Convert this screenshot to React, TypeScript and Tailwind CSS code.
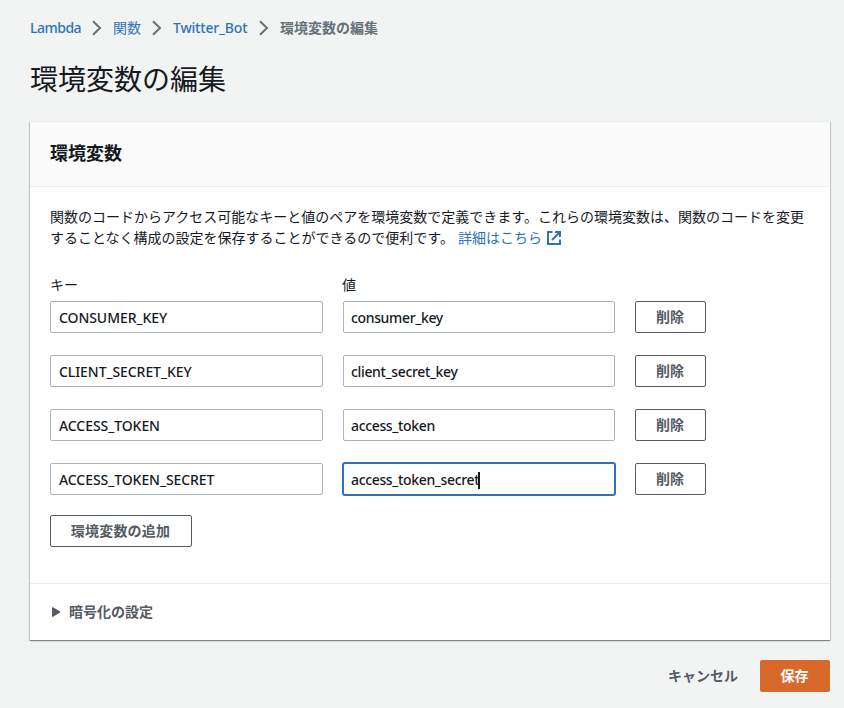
import { useState } from "react";
import { clsx } from "clsx";

type Variable = { key: string; value: string };

const initialVariables: Variable[] = [
  { key: "CONSUMER_KEY", value: "consumer_key" },
  { key: "CLIENT_SECRET_KEY", value: "client_secret_key" },
  { key: "ACCESS_TOKEN", value: "access_token" },
  { key: "ACCESS_TOKEN_SECRET", value: "access_token_secret" },
];

function Chevron() {
  return (
    <svg viewBox="0 0 10 16" className="mr-[11px] ml-[11px] h-4 w-2.5 shrink-0" fill="none" stroke="#687078" strokeWidth="2">
      <path d="M1 1.2 8 8 1 14.8" />
    </svg>
  );
}

function ExternalIcon() {
  return (
    <svg viewBox="0 0 16 16" className="ml-1 inline-block size-4 align-[-3px]" fill="none" stroke="#2e73b8" strokeWidth="2">
      <path d="M6.5 2H2v12h12V9.5M9 2h5v5M13.5 2.5 6 10" />
    </svg>
  );
}

function Button({ children, className }: { children: React.ReactNode; className?: string }) {
  return (
    <button
      type="button"
      className={clsx("h-8 rounded-xs border border-[#545b64] bg-white pr-px pb-px text-sm font-bold text-[#545b64]", className)}
    >
      {children}
    </button>
  );
}

function Field({ value, active, className }: { value: string; active?: boolean; className?: string }) {
  return (
    <div
      className={clsx(
        "flex h-8 items-center rounded-xs border bg-white pt-0.5 text-sm font-medium",
        active ? "border-[#2e73b8] ring-1 ring-[#2e73b8]" : "border-[#aab7b8]",
        className,
      )}
    >
      <span>{value}</span>
      {active && <span className="-ml-px h-[17px] w-0.5 bg-[#16191f]" />}
    </div>
  );
}

export default function App() {
  const [variables] = useState(initialVariables);

  return (
    <div className="h-[708px] w-[844px] overflow-hidden bg-[#f2f3f3] pr-3.5 pl-[30px] font-['Noto_Sans','Noto_Sans_CJK_JP',sans-serif] text-sm text-[#16191f]">
      <nav className="flex h-14 items-center text-[#2e73b8]">
        <a className="w-[51px] font-medium tracking-[-0.5px]">Lambda</a>
        <Chevron />
        <a>関数</a>
        <Chevron />
        <a className="w-[75px] font-medium tracking-[-0.2px]">Twitter_Bot</a>
        <Chevron />
        <span className="font-bold text-[#687078]">環境変数の編集</span>
      </nav>
      <h1 className="flex h-[46px] items-center text-[28px]">環境変数の編集</h1>

      <section className="mt-[19px] h-[519px] border-t border-[#eaeded] bg-white shadow-[0_1px_1px_0_rgba(0,28,36,0.3),1px_1px_1px_0_rgba(0,28,36,0.15),-1px_1px_1px_0_rgba(0,28,36,0.15)]">
        <header className="flex h-[65px] items-center border-b border-[#eaeded] bg-[#fafafa] px-5 pb-0.5">
          <h2 className="text-lg font-bold">環境変数</h2>
        </header>

        <div className="h-[397px] border-b border-[#eaeded] px-5 pt-[19px]">
          <p className="leading-[21px]">
            関数のコードからアクセス可能なキーと値のペアを環境変数で定義できます。これらの環境変数は、関数のコードを変更
            <br />
            することなく構成の設定を保存することができるので便利です。
            <a className="ml-1 text-[#2e73b8]">
              詳細はこちら
              <ExternalIcon />
            </a>
          </p>

          <div className="mt-[26px] flex h-[27px] gap-5 leading-[22px]">
            <span className="w-[272px]">キー</span>
            <span>値</span>
          </div>
          <div className="flex flex-col gap-[22px]">
            {variables.map((v, i) => (
              <div key={v.key} className="flex gap-5">
                <Field value={v.key} className="w-[273px] pl-2 tracking-[-0.07px]" />
                <Field value={v.value} active={i === variables.length - 1} className="w-[272px] pl-[7px] tracking-[-0.35px]" />
                <Button className="w-[71px]">削除</Button>
              </div>
            ))}
          </div>
          <Button className="mt-5 w-[142px] tracking-[0.2px]">環境変数の追加</Button>
        </div>

        <div className="flex h-14 items-center px-[22px] font-bold text-[#545b64]">
          <svg viewBox="0 0 9 10" className="mr-2 h-2.5 w-[9px]" fill="#545b64">
            <path d="M0 .6Q0 0 1 .2L7.8 4.2Q9 5 7.8 5.8L1 9.8Q0 10 0 9.4Z" />
          </svg>
          暗号化の設定
        </div>
      </section>

      <footer className="mt-5 flex items-center justify-end gap-[22px] font-bold">
        <button type="button" className="text-[#545b64]">キャンセル</button>
        <button type="button" className="h-8 w-[70px] rounded-xs bg-[#d9682b] pr-px pb-px text-white">保存</button>
      </footer>
    </div>
  );
}
